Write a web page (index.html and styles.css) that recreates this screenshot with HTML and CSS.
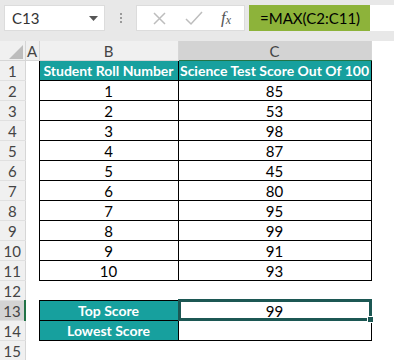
FILE: index.html
```html
<!DOCTYPE html>
<html lang="en">
<head>
    <meta charset="UTF-8">
    <title>MAX formula</title>
    <link rel="stylesheet" href="styles.css">
</head>
<body>
    <div class="formula-bar">
        <div class="name-box">
            <span>C13</span>
            <svg class="arrow" width="9" height="5" viewBox="0 0 9 5"><path d="M0 0h9L4.5 5z" fill="#555"/></svg>
        </div>
        <div class="grip"><i></i><i></i><i></i></div>
        <div class="buttons">
            <svg width="15" height="15" viewBox="0 0 15 15"><path d="M2 2l11 11M13 2L2 13" stroke="#bdbdbd" stroke-width="1.5"/></svg>
            <svg width="18" height="15" viewBox="0 0 18 15"><path d="M1 8l5 5L17 1" stroke="#bdbdbd" stroke-width="1.5" fill="none"/></svg>
            <span class="fx">f<sub>x</sub></span>
        </div>
        <div class="formula-input">
            <span class="formula">=MAX(C2:C11)</span>
        </div>
    </div>

    <table class="sheet">
        <colgroup>
            <col class="c-head"><col class="c-a"><col class="c-b"><col class="c-c"><col>
        </colgroup>
        <tr class="col-heads">
            <th class="corner"><svg width="14" height="14" viewBox="0 0 14 14"><path d="M14 0v14H0z" fill="#bdbdbd"/></svg></th>
            <th>A</th>
            <th>B</th>
            <th class="selected">C</th>
            <th class="blank"></th>
        </tr>
        <tr>
            <th class="row-num">1</th><td></td>
            <td class="box title">Student Roll Number</td>
            <td class="box title">Science Test Score Out Of 100</td><td></td>
        </tr>
        <tr><th class="row-num">2</th><td></td><td class="box">1</td><td class="box">85</td><td></td></tr>
        <tr><th class="row-num">3</th><td></td><td class="box">2</td><td class="box">53</td><td></td></tr>
        <tr><th class="row-num">4</th><td></td><td class="box">3</td><td class="box">98</td><td></td></tr>
        <tr><th class="row-num">5</th><td></td><td class="box">4</td><td class="box">87</td><td></td></tr>
        <tr><th class="row-num">6</th><td></td><td class="box">5</td><td class="box">45</td><td></td></tr>
        <tr><th class="row-num">7</th><td></td><td class="box">6</td><td class="box">80</td><td></td></tr>
        <tr><th class="row-num">8</th><td></td><td class="box">7</td><td class="box">95</td><td></td></tr>
        <tr><th class="row-num">9</th><td></td><td class="box">8</td><td class="box">99</td><td></td></tr>
        <tr><th class="row-num">10</th><td></td><td class="box">9</td><td class="box">91</td><td></td></tr>
        <tr><th class="row-num">11</th><td></td><td class="box">10</td><td class="box">93</td><td></td></tr>
        <tr><th class="row-num">12</th><td></td><td></td><td></td><td></td></tr>
        <tr>
            <th class="row-num selected">13</th><td></td>
            <td class="box title">Top Score</td>
            <td class="box active">99<span class="outline"><span class="handle"></span></span></td><td></td>
        </tr>
        <tr>
            <th class="row-num">14</th><td></td>
            <td class="box title">Lowest Score</td>
            <td class="box"></td><td></td>
        </tr>
        <tr><th class="row-num">15</th><td></td><td></td><td></td><td></td></tr>
    </table>
</body>
</html>
```

FILE: styles.css
```css
body {
    margin: 0;
    width: 394px;
    height: 360px;
    overflow: hidden;
    background-color: #fff;
    font-family: Lato, "Liberation Sans", sans-serif;
    color: #000;
}
.formula-bar {
    display: flex;
    align-items: center;
    height: 41px;
    padding: 0 0 5px 4px;
    box-sizing: border-box;
    background-color: #e8e8e8;
}
.name-box {
    display: flex;
    align-items: center;
    justify-content: space-between;
    width: 101px;
    height: 26px;
    padding: 0 6px 0 7px;
    box-sizing: border-box;
    background-color: #fff;
    border: 1px solid #dcdcdc;
    font-size: 15px;
    color: #333;
}
.name-box .arrow {
    margin-top: 1px;
}
.grip {
    display: flex;
    flex-direction: column;
    gap: 2px;
    width: 31px;
    align-items: center;
}
.grip i {
    width: 2px;
    height: 2px;
    background-color: #9a9a9a;
}
.buttons {
    display: flex;
    align-items: center;
    justify-content: space-around;
    width: 109px;
    height: 26px;
    padding: 0 4px 0 6px;
    box-sizing: border-box;
    background-color: #fff;
    border: 1px solid #dcdcdc;
}
.fx {
    font-family: "Liberation Serif", serif;
    font-style: italic;
    font-size: 17px;
    color: #555;
}
.fx sub {
    font-size: 12px;
    vertical-align: -1px;
}
.formula-input {
    flex: 1;
    display: flex;
    align-items: center;
    height: 26px;
    margin-left: 4px;
    background-color: #fff;
}
.formula {
    display: flex;
    align-items: center;
    height: 26px;
    padding: 0 10px 0 11px;
    background-color: #8db33a;
    font-size: 15px;
}
.sheet {
    border-collapse: collapse;
    table-layout: fixed;
    width: 394px;
}
.c-head { width: 25px; }
.c-a { width: 14px; }
.c-b { width: 139px; }
.c-c { width: 193px; }
.sheet th {
    font-weight: normal;
    color: #444;
    font-size: 15px;
}
.col-heads th {
    height: 18px;
    padding: 0;
    background-color: #f0f0f0;
    border-right: 1px solid #d6d6d6;
    border-bottom: 1px solid #d6d6d6;
    line-height: 18px;
}
.col-heads .corner {
    text-align: right;
    vertical-align: bottom;
    padding: 0 2px 1px 0;
}
.col-heads .corner svg {
    display: block;
    margin-left: auto;
}
.col-heads .selected {
    background-color: #d3d3d3;
    border-bottom: 1px solid #217346;
}
.col-heads .blank {
    background-color: #fff;
    border-right: none;
    border-bottom: none;
}
.sheet td {
    height: 19px;
    padding: 0;
    text-align: center;
    font-size: 15px;
}
.row-num {
    height: 19px;
    padding: 0;
    background-color: #f0f0f0;
    border-right: 1px solid #d6d6d6;
    border-bottom: 1px solid #e0e0e0;
}
.row-num.selected {
    background-color: #d3d3d3;
    border-right: 2px solid #217346;
    color: #444;
}
.sheet .box {
    border: 1px solid #000;
}
.sheet .title {
    background-color: #17a09e;
    color: #fff;
    font-weight: bold;
    font-size: 14px;
}
.active {
    position: relative;
}
.outline {
    position: absolute;
    left: -1px;
    top: -2px;
    right: -1px;
    bottom: -1px;
    border: 3px solid #1c5753;
}
.handle {
    position: absolute;
    right: -5px;
    bottom: -5px;
    width: 5px;
    height: 5px;
    background-color: #1c5753;
    border: 1px solid #fff;
}
```
